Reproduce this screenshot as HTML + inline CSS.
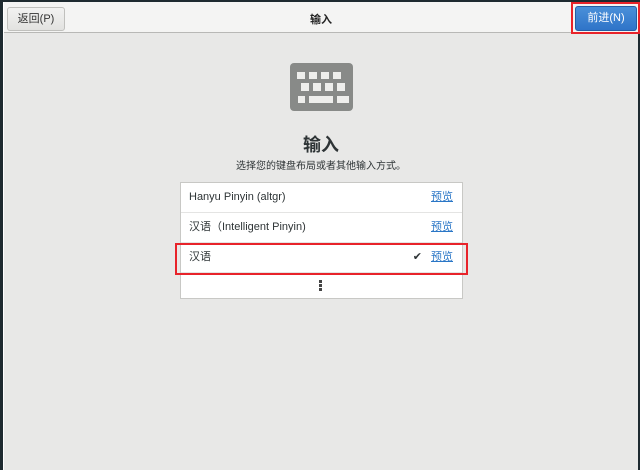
<!DOCTYPE html><html><head><meta charset="utf-8"><style>
body{margin:0;width:640px;height:470px;background:#1e2a30;font-family:"Liberation Sans","Noto Sans CJK SC",sans-serif;overflow:hidden;position:relative}
.win{position:absolute;left:3px;top:2px;right:2px;bottom:0;background:#e8e8e7;border-left:1px solid #fff}
.hdr{position:absolute;left:0;top:0;right:0;height:30px;background:#f4f4f3;border-bottom:1px solid #b8b8b6}
.btn{position:absolute;font-size:11px;text-align:center;line-height:22px;border-radius:3px}
.ab{position:absolute}
.row{position:absolute;left:0;right:0;height:29px;border-bottom:1px solid #e4e4e3;font-size:11px;color:#2e3436;line-height:29px}
.lnk{position:absolute;right:9px;top:0;color:#2a76c6;text-decoration:underline}
</style></head><body>
<div class="win">
<div class="hdr">
<div class="btn" style="left:3px;top:5px;width:56px;height:22px;background:linear-gradient(#f2f2f1,#e2e2e0);border:1px solid #c0c0bd;color:#333">返回(P)</div>
<div class="ab" style="left:0;right:0;top:9px;text-align:center;font-size:11px;font-weight:bold;color:#222">输入</div>
<div class="btn" style="left:571px;top:4px;width:60px;height:23px;background:linear-gradient(#4a90d9,#2f74c8);border:1px solid #235ea3;color:#fff">前进(N)</div>
<div class="ab" style="left:567px;top:0px;width:65px;height:28px;border:2px solid #e8232a"></div>
</div>
<svg class="ab" style="left:286px;top:61px" width="63" height="48"><rect width="63" height="48" rx="4" fill="#888a88"/>
<g fill="#eeeeec"><rect x="7" y="9" width="8" height="7"/><rect x="19" y="9" width="8" height="7"/><rect x="31" y="9" width="8" height="7"/><rect x="43" y="9" width="8" height="7"/>
<rect x="11" y="20" width="8" height="8"/><rect x="23" y="20" width="8" height="8"/><rect x="35" y="20" width="8" height="8"/><rect x="47" y="20" width="8" height="8"/>
<rect x="8" y="33" width="7" height="7"/><rect x="19" y="33" width="24" height="7"/><rect x="47" y="33" width="12" height="7"/></g></svg>
<div class="ab" style="left:0;right:0;top:129px;text-align:center;font-size:18px;font-weight:bold;color:#2e3436">输入</div>
<div class="ab" style="left:0;right:0;top:155px;text-align:center;font-size:10px;color:#2e3436">选择您的键盘布局或者其他输入方式。</div>
<div class="ab" style="left:176px;top:180px;width:281px;height:115px;background:#fff;border:1px solid #c8c8c5">
<div class="row" style="top:0"><span style="margin-left:8px">Hanyu Pinyin (altgr)</span><span class="lnk">预览</span></div>
<div class="row" style="top:30px"><span style="margin-left:8px">汉语（Intelligent Pinyin)</span><span class="lnk">预览</span></div>
<div class="row" style="top:60px"><span style="margin-left:8px">汉语</span><span class="ab" style="right:40px;font-size:11px">✔</span><span class="lnk">预览</span></div>
<div class="ab" style="left:138px;top:97px;width:3px"><div style="width:3px;height:3px;background:#444;margin-bottom:1px"></div><div style="width:3px;height:3px;background:#444;margin-bottom:1px"></div><div style="width:3px;height:3px;background:#444"></div></div>
</div>
<div class="ab" style="left:171px;top:241px;width:289px;height:28px;border:2px solid #e8232a"></div>
</div>
</body></html>
